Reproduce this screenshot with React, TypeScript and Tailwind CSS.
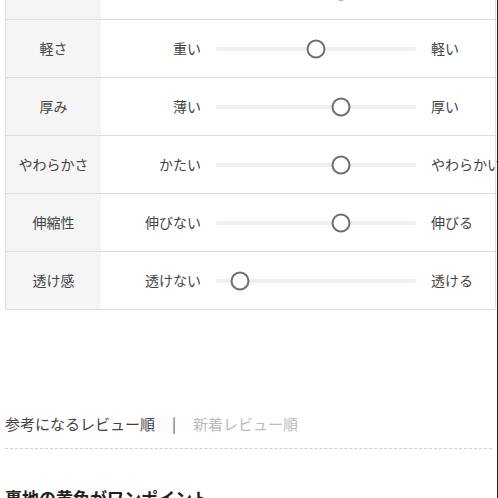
const rows = [
  { label: '', left: '', right: '', pos: 62.5 },
  { label: '軽さ', left: '重い', right: '軽い', pos: 50 },
  { label: '厚み', left: '薄い', right: '厚い', pos: 62.5 },
  { label: 'やわらかさ', left: 'かたい', right: 'やわらかい', pos: 62.5 },
  { label: '伸縮性', left: '伸びない', right: '伸びる', pos: 62.5 },
  { label: '透け感', left: '透けない', right: '透ける', pos: 12 },
];

function Slider({ pos }: { pos: number }) {
  return (
    <div className="relative w-[200px] h-[4px] bg-[#efefef] rounded-full mx-[15px] shrink-0">
      <span
        className="absolute top-1/2 w-[19px] h-[19px] -translate-x-1/2 -translate-y-1/2 rounded-full border-[2.5px] border-[#6f6f6f] bg-white"
        style={{ left: `${pos}%` }}
      />
    </div>
  );
}

export default function App() {
  return (
    <div className="w-[498px] h-[498px] overflow-hidden bg-white border-r border-[#222] text-[#444]" style={{ fontFamily: '"Noto Sans CJK JP", "Noto Sans", sans-serif' }}>
      <div className="ml-[5px] mr-[1px] -mt-[38px] border-l border-r border-[#dedede]">
        {rows.map((r, i) => (
          <div key={i} className="flex h-[58px] border-b border-[#dedede]">
            <div className="w-[95px] shrink-0 bg-[#f5f5f5] flex items-center justify-center text-[14px]">{r.label}</div>
            <div className="flex-1 flex items-center text-[14px]">
              <span className="w-[100px] text-right whitespace-nowrap">{r.left}</span>
              <Slider pos={r.pos} />
              <span className="whitespace-nowrap">{r.right}</span>
            </div>
          </div>
        ))}
      </div>
      <div className="mt-[104px] mx-[5px] h-[35px] border-b border-dashed border-[#cfcfcf]">
        <div className="flex items-center h-5 text-[15px] leading-5">
          <span className="text-[#444]">参考になるレビュー順</span>
          <span className="mx-[17px] text-[#555]">|</span>
          <span className="text-[#bbb]">新着レビュー順</span>
        </div>
      </div>
      <h3 className="mt-[36px] mx-[5px] text-[17px] font-bold text-[#222] leading-[26px]">裏地の黄色がワンポイント</h3>
    </div>
  );
}
